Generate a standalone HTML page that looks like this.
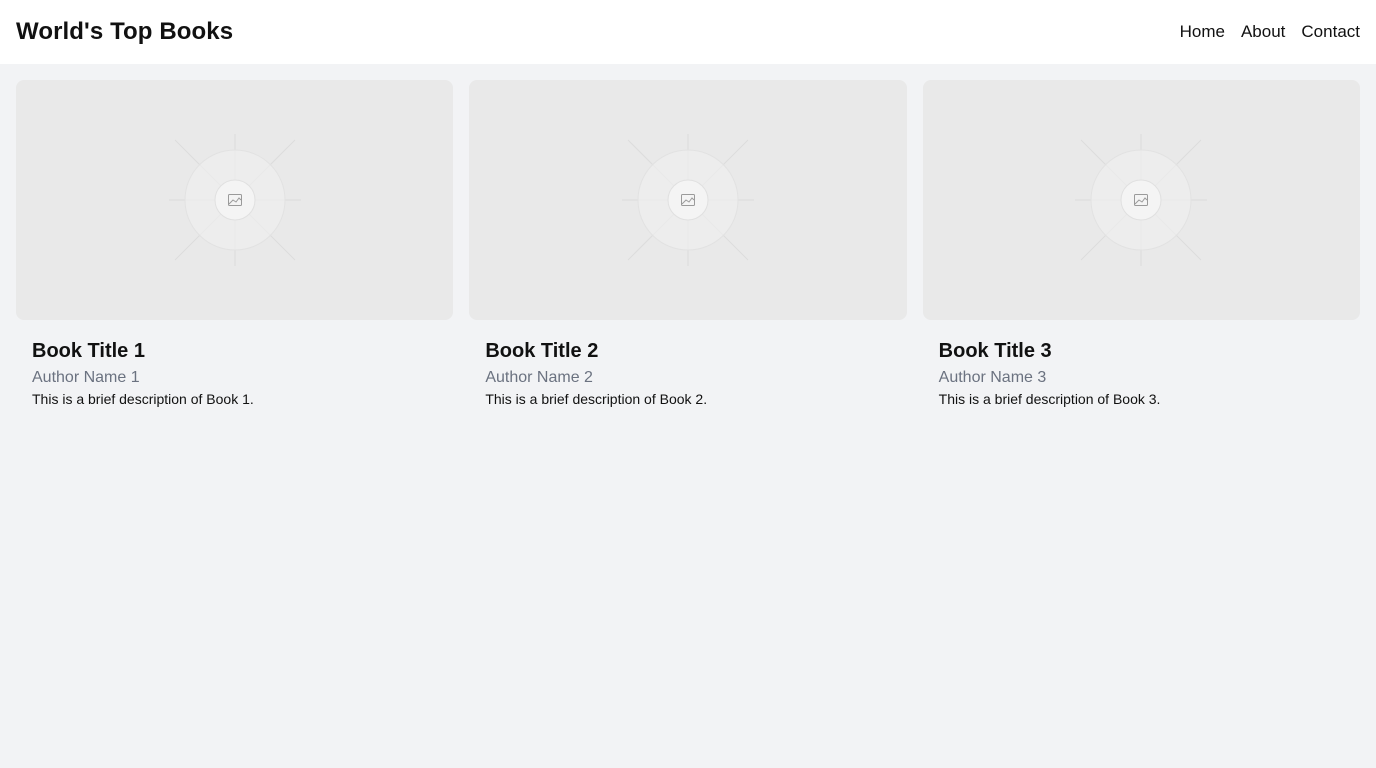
<!DOCTYPE html>
<html><head><meta charset="utf-8"><style>
*{margin:0;padding:0;box-sizing:border-box}
body{width:1376px;height:768px;background:#f2f3f5;font-family:"Liberation Sans",Arial,sans-serif;overflow:hidden}
header{height:64px;background:#fff;display:flex;align-items:center;justify-content:space-between;padding:0 16px}
h1{font-size:24px;font-weight:700;color:#111;letter-spacing:0.1px}
nav a{font-size:17px;color:#111;text-decoration:none;margin-left:16px}
.grid{display:flex;gap:16px;padding:16px}
.card{flex:1}
.img{height:240px;background:#e9e9e9;border-radius:8px;position:relative}
.img svg{position:absolute;left:50%;top:50%;margin-left:-70px;margin-top:-70px}
.body{padding:20px 16px}
h2{font-size:20px;font-weight:700;color:#111;margin-bottom:6px}
.au{font-size:16px;color:#6b7280;margin-bottom:4px}
.d{font-size:14px;color:#111}
</style></head><body>
<header><h1>World's Top Books</h1><nav><a>Home</a><a>About</a><a>Contact</a></nav></header>
<div class="grid">
<div class="card"><div class="img"><svg width="140" height="140" viewBox="0 0 140 140"><g stroke="#dcdcdc" stroke-width="1" fill="none"><line x1="70" y1="4" x2="70" y2="136"/><line x1="4" y1="70" x2="136" y2="70"/><line x1="10" y1="10" x2="130" y2="130"/><line x1="130" y1="10" x2="10" y2="130"/></g><circle cx="70" cy="70" r="50" fill="#eeeeee" fill-opacity="0.7" stroke="#e2e2e2"/><circle cx="70" cy="70" r="20" fill="#f4f4f4" stroke="#e0e0e0"/><g stroke="#9a9a9a" stroke-width="1" fill="none"><rect x="63.5" y="64.5" width="13" height="11" rx="1"/><path d="M64 74l4-4 3 2 3-4 2 2"/></g></svg></div><div class="body"><h2>Book Title 1</h2><div class="au">Author Name 1</div><div class="d">This is a brief description of Book 1.</div></div></div>
<div class="card"><div class="img"><svg width="140" height="140" viewBox="0 0 140 140"><g stroke="#dcdcdc" stroke-width="1" fill="none"><line x1="70" y1="4" x2="70" y2="136"/><line x1="4" y1="70" x2="136" y2="70"/><line x1="10" y1="10" x2="130" y2="130"/><line x1="130" y1="10" x2="10" y2="130"/></g><circle cx="70" cy="70" r="50" fill="#eeeeee" fill-opacity="0.7" stroke="#e2e2e2"/><circle cx="70" cy="70" r="20" fill="#f4f4f4" stroke="#e0e0e0"/><g stroke="#9a9a9a" stroke-width="1" fill="none"><rect x="63.5" y="64.5" width="13" height="11" rx="1"/><path d="M64 74l4-4 3 2 3-4 2 2"/></g></svg></div><div class="body"><h2>Book Title 2</h2><div class="au">Author Name 2</div><div class="d">This is a brief description of Book 2.</div></div></div>
<div class="card"><div class="img"><svg width="140" height="140" viewBox="0 0 140 140"><g stroke="#dcdcdc" stroke-width="1" fill="none"><line x1="70" y1="4" x2="70" y2="136"/><line x1="4" y1="70" x2="136" y2="70"/><line x1="10" y1="10" x2="130" y2="130"/><line x1="130" y1="10" x2="10" y2="130"/></g><circle cx="70" cy="70" r="50" fill="#eeeeee" fill-opacity="0.7" stroke="#e2e2e2"/><circle cx="70" cy="70" r="20" fill="#f4f4f4" stroke="#e0e0e0"/><g stroke="#9a9a9a" stroke-width="1" fill="none"><rect x="63.5" y="64.5" width="13" height="11" rx="1"/><path d="M64 74l4-4 3 2 3-4 2 2"/></g></svg></div><div class="body"><h2>Book Title 3</h2><div class="au">Author Name 3</div><div class="d">This is a brief description of Book 3.</div></div></div>
</div>
</body></html>
